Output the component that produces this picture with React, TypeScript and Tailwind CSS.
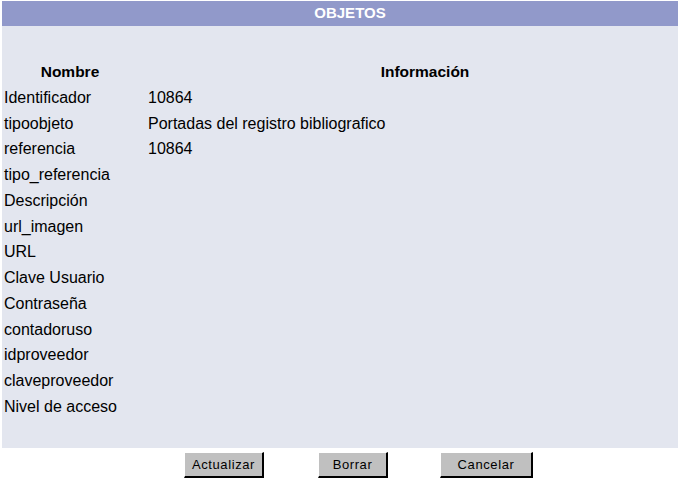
const ROWS: [string, string][] = [
  ['Identificador', '10864'],
  ['tipoobjeto', 'Portadas del registro bibliografico'],
  ['referencia', '10864'],
  ['tipo_referencia', ''],
  ['Descripción', ''],
  ['url_imagen', ''],
  ['URL', ''],
  ['Clave Usuario', ''],
  ['Contraseña', ''],
  ['contadoruso', ''],
  ['idproveedor', ''],
  ['claveproveedor', ''],
  ['Nivel de acceso', ''],
];

function Button({ label, width }: { label: string; width: string }) {
  return (
    <button
      type="button"
      className={`h-[26px] ${width} border-t border-l border-white border-r-2 border-b-2 border-r-black border-b-black bg-[#c0c0c0] text-[13px] tracking-[0.6px] text-black`}
    >
      {label}
    </button>
  );
}

export default function App() {
  return (
    <div className="h-[482px] w-[678px] overflow-hidden bg-white pt-px pl-[2px] font-['Liberation_Sans',Arial,sans-serif] text-black">
      <div className="h-[447px] bg-[#e3e6ef]">
        <div className="flex h-[25px] items-center justify-center bg-[#9199ca] pl-[20px] text-[15px] font-bold text-white">
          OBJETOS
        </div>

        <div className="mt-[33px]">
          <div className="flex h-[26px] items-center text-[15.5px] font-bold">
            <div className="w-[136px] text-center">Nombre</div>
            <div className="flex-1 pl-[34px] text-center">Información</div>
          </div>
          {ROWS.map(([name, info]) => (
            <div key={name} className="flex h-[25.75px] items-center text-[16px]">
              <div className="w-[146px] pl-[2px]">{name}</div>
              <div className="flex-1">{info}</div>
            </div>
          ))}
        </div>
      </div>

      <div className="flex h-[34px] items-center">
        <div className="ml-[182px]">
          <Button label="Actualizar" width="w-[80px]" />
        </div>
        <div className="ml-[54px]">
          <Button label="Borrar" width="w-[70px]" />
        </div>
        <div className="ml-[52px]">
          <Button label="Cancelar" width="w-[93px]" />
        </div>
      </div>
    </div>
  );
}
